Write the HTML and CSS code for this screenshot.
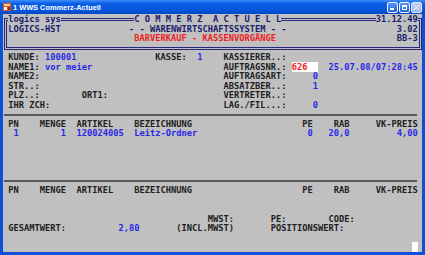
FILE: index.html
```html
<!DOCTYPE html>
<html lang="de">
<head>
    <meta charset="UTF-8">
    <meta name="viewport" content="width=device-width, initial-scale=1.0">
    <title>1 WWS Commerz-Actuell</title>
    <link rel="stylesheet" href="styles.css">
</head>
<body>
    <div class="window">
        <div class="titlebar">
            <svg class="app-icon" viewBox="0 0 8 8">
                <rect x="0" y="0" width="8" height="8" fill="#e2561a"/>
                <rect x="1" y="1" width="6" height="2" fill="#ffd08a"/>
                <rect x="1" y="4" width="3" height="3" fill="#ffffff"/>
                <rect x="5" y="4" width="2" height="3" fill="#b02010"/>
            </svg>
            <span class="title">1 WWS Commerz-Actuell</span>
            <div class="buttons">
                <span class="btn btn-min"></span>
                <span class="btn btn-max"></span>
                <span class="btn btn-close"></span>
            </div>
        </div>
        <div class="client">
            <div class="screen">
                <div class="header">
                    <div class="frame"></div>
                    <div class="row"> <span class="lbl">logics sys</span>              <span class="lbl">C O M M E R Z  A C T U E L L</span>                  <span class="lbl">31.12.49</span></div>
                    <div class="row"> LOGICS-HST             - - WARENWIRTSCHAFTSSYSTEM - -                     3.02</div>
                    <div class="row">                         <span class="red">BARVERKAUF - KASSENVORGÄNGE</span>                       BB-3</div>
                    <div class="row"></div>
                </div>
                <div class="row"> KUNDE: <span class="blue">100001</span>               KASSE:  <span class="blue">1</span>    KASSIERER..:</div>
                <div class="row"> NAME1: <span class="blue">vor meier</span>                         AUFTRAGSNR.: <span class="field">626  </span>  <span class="blue">25.07.08/07:28:45</span></div>
                <div class="row"> NAME2:                                   AUFTRAGSART:     <span class="blue">0</span></div>
                <div class="row"> STR..:                                   ABSATZBER..:     <span class="blue">1</span></div>
                <div class="row"> PLZ..:        ORT1:                      VERTRETER..:</div>
                <div class="row"> IHR ZCH:                                 LAG./FIL...:     <span class="blue">0</span></div>
                <div class="rule"></div>
                <div class="row"> PN    MENGE  ARTIKEL    BEZEICHNUNG                     PE    RAB     VK-PREIS</div>
                <div class="row blue">  1        1  120024005  Leitz-Ordner                     0   20,0         4,00</div>
                <div class="row"></div>
                <div class="row"></div>
                <div class="row"></div>
                <div class="row"></div>
                <div class="rule"></div>
                <div class="row"> PN    MENGE  ARTIKEL    BEZEICHNUNG                     PE    RAB     VK-PREIS</div>
                <div class="row"></div>
                <div class="row"></div>
                <div class="row">                                       MWST:       PE:        CODE:</div>
                <div class="row"> GESAMTWERT:          <span class="blue">2,80</span>       (INCL.MWST)       POSITIONSWERT:</div>
                <div class="row"></div>
                <div class="row">                                                                              <span class="cursor"> </span></div>
            </div>
        </div>
    </div>
</body>
</html>
```

FILE: styles.css
```css
body {
    margin: 0;
    width: 425px;
    height: 255px;
    overflow: hidden;
    background-color: #c0c0c0;
}

.window {
    width: 425px;
    height: 255px;
    display: flex;
    flex-direction: column;
}

/* XP style caption */
.titlebar {
    height: 14px;
    box-sizing: border-box;
    padding: 0 3px;
    display: flex;
    align-items: center;
    background: linear-gradient(#3d8ff8 0%, #0b5ee6 25%, #0757de 70%, #0547c4 100%);
}

.app-icon {
    width: 8px;
    height: 8px;
    margin-right: 2px;
}

.title {
    flex: 1;
    font-family: "Liberation Sans", Arial, sans-serif;
    font-size: 7.4px;
    font-weight: bold;
    color: #fff;
}

.buttons {
    display: flex;
    gap: 1px;
}

.btn {
    position: relative;
    width: 11px;
    height: 11px;
    box-sizing: border-box;
    border: 1px solid #f0f4ff;
    border-radius: 2px;
    background: linear-gradient(#5a96f8, #2462e2);
}

.btn-min::after {
    content: "";
    position: absolute;
    left: 2px;
    bottom: 2px;
    width: 4px;
    height: 2px;
    background: #fff;
}

.btn-max::after {
    content: "";
    position: absolute;
    left: 2px;
    top: 2px;
    width: 5px;
    height: 5px;
    box-sizing: border-box;
    border: 1px solid #fff;
    border-top-width: 2px;
}

.btn-close {
    background: linear-gradient(#c0cff0, #9fb6e6);
    border-color: #dde6f8;
}

.btn-close::before,
.btn-close::after {
    content: "";
    position: absolute;
    left: 1px;
    top: 4px;
    width: 7px;
    height: 1px;
    background: #e4ebfa;
    transform: rotate(45deg);
}

.btn-close::after {
    transform: rotate(-45deg);
}

/* text screen, 80 x 25 cells */
.client {
    flex: 1;
    border: 3px solid #0c50d8;
    border-top: 0;
    padding-top: 1px;
    background-color: #c0c0c0;
    overflow: hidden;
}

.screen {
    font-family: "DejaVu Sans Mono", monospace;
    font-size: 8.72px; /* 5.25px per cell */
    font-weight: bold;
    line-height: 9.5px;
    color: #202020;
}

.row {
    height: 9.5px;
    white-space: pre;
}

.header {
    position: relative;
    isolation: isolate;
    color: #1c1c6c;
}

.frame {
    position: absolute;
    z-index: -1;
    left: 1.1px;
    top: 3.25px;
    width: 417.8px;
    height: 31.5px;
    box-sizing: border-box;
    border: 3px double #26267a;
}

.lbl {
    background-color: #c0c0c0;
}

.blue {
    color: #2828e8;
}

.red {
    color: #f02020;
}

.field {
    background-color: #fff;
    color: #f02020;
}

.rule {
    height: 9.5px;
    display: flex;
    align-items: center;
}

.rule::after {
    content: "";
    flex: 1;
    height: 2px;
    margin: 0 5px 0 1px;
    background-color: #585858;
}

.cursor {
    background-color: #fff;
}
```
